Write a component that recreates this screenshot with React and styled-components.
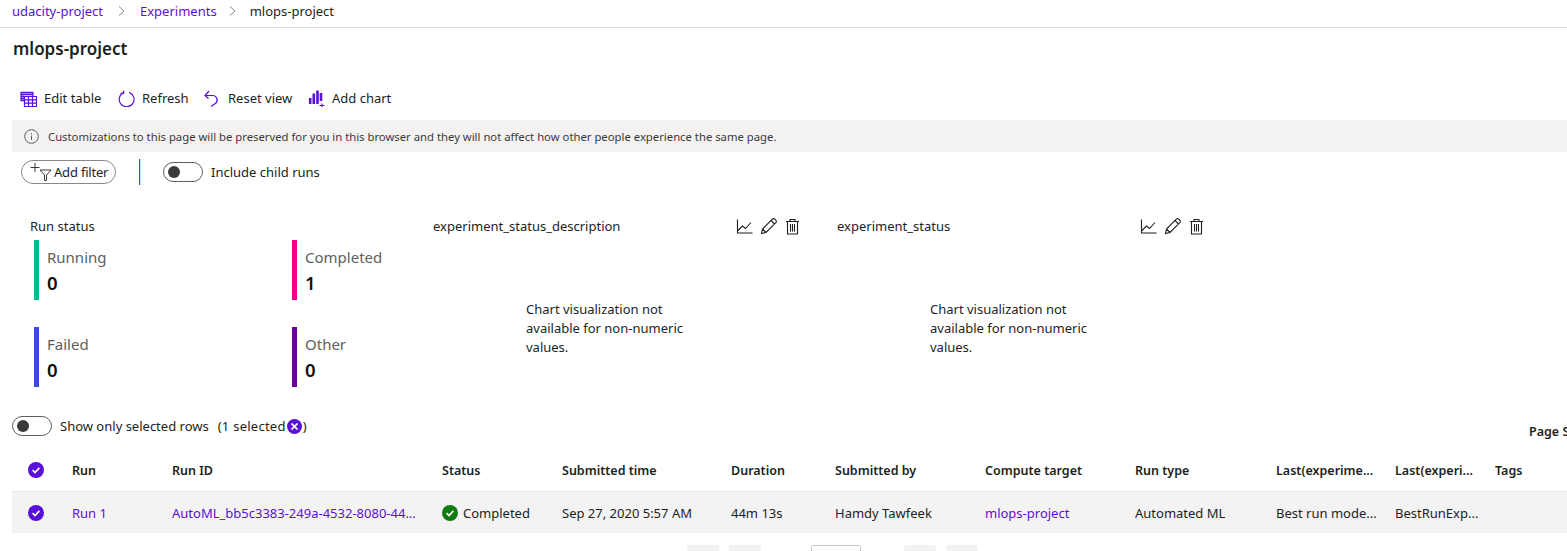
import React from 'react';
import styled, { createGlobalStyle } from 'styled-components';

const accent = '#5a10d8';
const font = '"Noto Sans", "Open Sans", sans-serif';

const GlobalStyle = createGlobalStyle`
  html, body {
    margin: 0;
    padding: 0;
    background: #fff;
    overflow: hidden;
  }
  body {
    font-family: ${font};
    font-size: 13px;
    color: #201f1e;
  }
`;

const Page = styled.div`
  width: 1567px;
  height: 551px;
  overflow: hidden;
`;

const Breadcrumb = styled.nav`
  height: 27px;
  box-sizing: border-box;
  padding: 0 0 5px 12px;
  display: flex;
  align-items: center;
  box-shadow: 0 1px 0 #dcdcdc;
`;

const Crumb = styled.a`
  color: ${props => (props.$current ? '#201f1e' : accent)};
`;

const Chevron = styled.svg`
  width: 8px;
  height: 10px;
  margin: 0 ${props => props.$gap}px;
  fill: none;
  stroke: #8a8886;
  stroke-width: 1;
`;

const Title = styled.h1`
  margin: 11px 0 0 13px;
  height: 22px;
  font-size: 17px;
  line-height: 22px;
  font-weight: 600;
  color: #201f1e;
`;

const Toolbar = styled.div`
  margin-top: 27px;
  height: 22px;
  padding-left: 20px;
  display: flex;
  align-items: center;
`;

const ToolButton = styled.button`
  width: ${props => props.$width}px;
  padding: 0;
  border: 0;
  background: none;
  font: inherit;
  color: #201f1e;
  display: flex;
  align-items: center;
  gap: 7px;
  svg {
    width: 17px;
    height: 17px;
    flex: none;
    fill: none;
    stroke: ${accent};
    stroke-width: 1.2;
  }
`;

const Notice = styled.div`
  margin: 11px 0 0 12px;
  height: 32px;
  background: #f3f2f1;
  display: flex;
  align-items: center;
  padding-left: 12px;
  gap: 9px;
  font-size: 11.3px;
  color: #3b3a39;
  svg {
    width: 15px;
    height: 15px;
    fill: none;
    stroke: #605e5c;
  }
`;

const FilterRow = styled.div`
  margin-top: 7px;
  height: 26px;
  padding-left: 21px;
  display: flex;
  align-items: center;
`;

const FilterPill = styled.button`
  width: 95px;
  height: 24px;
  box-sizing: border-box;
  padding: 0 0 0 7px;
  border: 1px solid #8a8886;
  border-radius: 12px;
  background: #fff;
  font: inherit;
  color: #201f1e;
  letter-spacing: -0.2px;
  display: flex;
  align-items: center;
  gap: 1px;
  svg {
    width: 24px;
    height: 20px;
    fill: none;
    stroke: #3b3a39;
  }
`;

const Divider = styled.span`
  width: 1px;
  height: 26px;
  margin: 0 23px;
  background: #7a5010;
  box-shadow: 1px 0 0 #cfe4f5;
`;

const Toggle = styled.span`
  width: 40px;
  height: 20px;
  flex: none;
  box-sizing: border-box;
  border: 1px solid #605e5c;
  border-radius: 10px;
  padding-left: 4px;
  display: flex;
  align-items: center;
  &::before {
    content: '';
    width: 12px;
    height: 12px;
    border-radius: 50%;
    background: #3b3a39;
  }
`;

const ToggleLabel = styled.span`
  margin-left: 8px;
`;

const Tiles = styled.section`
  margin-top: 31px;
  padding-left: 30px;
  height: 200px;
  display: grid;
  grid-template-columns: 403px 404px 404px;
`;

const TileHead = styled.div`
  height: 20px;
  width: 368px;
  display: flex;
  align-items: center;
  justify-content: space-between;
`;

const TileActions = styled.div`
  display: flex;
  gap: 7px;
  svg {
    width: 17px;
    height: 17px;
    fill: none;
    stroke: #201f1e;
    stroke-width: 1.1;
  }
`;

const StatusGrid = styled.div`
  margin: 4px 0 0 4px;
  display: grid;
  grid-template-columns: 258px 100px;
  grid-auto-rows: 60px;
  row-gap: 27px;
`;

const StatusBlock = styled.div`
  border-left: 5px solid ${props => props.$color};
  padding-left: 8px;
`;

const StatusLabel = styled.div`
  margin-top: 5px;
  font-size: 15px;
  line-height: 24px;
  color: #605e5c;
`;

const StatusValue = styled.div`
  font-size: 18.5px;
  line-height: 27px;
  font-weight: 600;
  color: #111;
`;

const ChartMessage = styled.p`
  margin: 64px 0 0 93px;
  width: 180px;
  line-height: 19px;
`;

const SelectionRow = styled.div`
  height: 20px;
  padding-left: 12px;
  display: flex;
  align-items: center;
`;

const SelectedCount = styled.span`
  margin-left: 9px;
  display: flex;
  align-items: center;
  letter-spacing: 0.25px;
`;

const ClearBadge = styled.span`
  width: 15px;
  height: 15px;
  margin: 0 1px;
  border-radius: 50%;
  background: ${accent};
  display: flex;
  align-items: center;
  justify-content: center;
  svg {
    width: 7px;
    height: 7px;
    stroke: #fff;
    stroke-width: 1.6;
  }
`;

const PageSize = styled.span`
  margin: 10px 0 0 auto;
  flex: none;
  width: 38px;
  white-space: nowrap;
  font-weight: 600;
  font-size: 12.5px;
`;

const Row = styled.div`
  margin: ${props => props.$top}px 0 0 12px;
  display: grid;
  grid-template-columns: 60px 100px 270px 120px 169px 104px 150px 150px 141px 119px 100px 1fr;
  align-items: center;
  height: ${props => props.$height}px;
  background: ${props => (props.$selected ? '#f3f3f3' : 'transparent')};
  box-shadow: ${props => (props.$selected ? 'none' : '0 1px 0 #e8e8e8')};
  font-weight: ${props => (props.$selected ? 400 : 600)};
  font-size: ${props => (props.$selected ? 13 : 12.5)}px;
`;

const Cell = styled.div`
  white-space: nowrap;
  color: ${props => (props.$link ? accent : '#201f1e')};
`;

const StatusCell = styled.div`
  display: flex;
  align-items: center;
  gap: 5px;
  svg {
    width: 16px;
    height: 16px;
    flex: none;
  }
`;

const CheckCell = styled.div`
  padding-left: 16px;
  display: flex;
  svg {
    width: 16px;
    height: 16px;
  }
`;

const Pager = styled.div`
  margin-top: 12px;
  padding-left: 687px;
  display: flex;
`;

const PageButton = styled.span`
  width: 32px;
  height: 32px;
  margin-right: ${props => props.$gap}px;
  background: #f3f2f1;
  border-radius: 2px;
`;

const PageInput = styled.span`
  width: 50px;
  height: 32px;
  box-sizing: border-box;
  margin-right: 43px;
  border: 1px solid #c8c6c4;
  border-radius: 2px;
`;

const Check = ({ color = accent }) => (
  <svg viewBox="0 0 16 16">
    <circle cx="8" cy="8" r="8" fill={color} />
    <path d="M4.6 8.2l2.4 2.3 4.4-4.6" fill="none" stroke="#fff" strokeWidth="1.6" />
  </svg>
);

const GridIcon = () => (
  <svg viewBox="0 0 17 17">
    <path d="M1 2.5h12M1 4.5h12M1 6.5h3M1 8.5h3M1 10.5h3" strokeWidth="1.4" />
    <path d="M4.5 6.5h12v10h-12zM4.5 9.8h12M4.5 13.1h12M8.5 6.5v10M12.5 6.5v10" />
    <path d="M1 2v9M13 2v4" />
  </svg>
);

const RefreshIcon = () => (
  <svg viewBox="0 0 17 17">
    <path d="M5.6 2.6a7.4 7.4 0 1 0 5.6-.2" />
    <path d="M5.6 0.4v3h-3" />
  </svg>
);

const ResetIcon = () => (
  <svg viewBox="0 0 17 17">
    <path d="M1 5.500h7.500a4.500 4.500 0 0 1 3.500 7.500L7 16.500" />
    <path d="M5 1L1 5.500l3.500 3" />
  </svg>
);

const BarsIcon = () => (
  <svg viewBox="0 0 17 17">
    <path d="M2.200 8v6M5.800 3.500v10.500M9.500 0.500v13.500M13 3v8" strokeWidth="2.600" />
    <path d="M11.500 15.500h5M14 13.500v3.500" strokeWidth="1.100" />
  </svg>
);

const TrendIcon = () => (
  <svg viewBox="0 0 17 17">
    <path d="M1.500 1.500v13.500h15" />
    <path d="M2 12.500l4.500-4.500 3 2.500 5.500-6" />
  </svg>
);

const PencilIcon = () => (
  <svg viewBox="0 0 17 17">
    <path d="M1.500 15.500l1-4.500L12.300 1.200a1.800 1.800 0 0 1 2.600 0l.9.9a1.800 1.800 0 0 1 0 2.600L6 14.500zM2.500 11L6 14.500M11 2.500l3.500 3.500" />
  </svg>
);

const TrashIcon = () => (
  <svg viewBox="0 0 17 17">
    <path d="M2 3.500h13M6 3.500V1.500h5v2M3.500 3.500v12.500h10V3.500M6.500 6v7.500M8.500 6v7.500M10.500 6v7.500" />
  </svg>
);

const ChartActions = () => (
  <TileActions>
    <TrendIcon />
    <PencilIcon />
    <TrashIcon />
  </TileActions>
);

const headers = ['Run', 'Run ID', 'Status', 'Submitted time', 'Duration', 'Submitted by', 'Compute target', 'Run type', 'Last(experime...', 'Last(experi...', 'Tags'];

export default function App() {
  return (
    <Page>
      <GlobalStyle />
      <Breadcrumb>
        <Crumb>udacity-project</Crumb>
        <Chevron $gap={14.5} viewBox="0 0 8 10"><path d="M1 0.500l5 4.500-5 4.500" /></Chevron>
        <Crumb>Experiments</Crumb>
        <Chevron $gap={12.5} viewBox="0 0 8 10"><path d="M1 0.500l5 4.500-5 4.500" /></Chevron>
        <Crumb $current>mlops-project</Crumb>
      </Breadcrumb>
      <Title>mlops-project</Title>

      <Toolbar>
        <ToolButton $width={98}><GridIcon />Edit table</ToolButton>
        <ToolButton $width={86}><RefreshIcon />Refresh</ToolButton>
        <ToolButton $width={104}><ResetIcon />Reset view</ToolButton>
        <ToolButton $width={100}><BarsIcon />Add chart</ToolButton>
      </Toolbar>

      <Notice>
        <svg viewBox="0 0 15 15">
          <circle cx="7.500" cy="7.500" r="6.800" />
          <path d="M7.500 6.500v4.500M7.500 4v1.200" />
        </svg>
        Customizations to this page will be preserved for you in this browser and they will not affect how other people experience the same page.
      </Notice>

      <FilterRow>
        <FilterPill>
          <svg viewBox="0 0 24 20">
            <path d="M1.500 5.500h9M6 1v9M11 8h11l-4.500 5v5.500h-2V13z" />
          </svg>
          Add filter
        </FilterPill>
        <Divider />
        <Toggle />
        <ToggleLabel>Include child runs</ToggleLabel>
      </FilterRow>

      <Tiles>
        <div>
          <TileHead>Run status</TileHead>
          <StatusGrid>
            <StatusBlock $color="#00bc8f"><StatusLabel>Running</StatusLabel><StatusValue>0</StatusValue></StatusBlock>
            <StatusBlock $color="#f2008c"><StatusLabel>Completed</StatusLabel><StatusValue>1</StatusValue></StatusBlock>
            <StatusBlock $color="#3b4bd8"><StatusLabel>Failed</StatusLabel><StatusValue>0</StatusValue></StatusBlock>
            <StatusBlock $color="#6a0099"><StatusLabel>Other</StatusLabel><StatusValue>0</StatusValue></StatusBlock>
          </StatusGrid>
        </div>
        <div>
          <TileHead>experiment_status_description<ChartActions /></TileHead>
          <ChartMessage>Chart visualization not available for non-numeric values.</ChartMessage>
        </div>
        <div>
          <TileHead>experiment_status<ChartActions /></TileHead>
          <ChartMessage>Chart visualization not available for non-numeric values.</ChartMessage>
        </div>
      </Tiles>

      <SelectionRow>
        <Toggle />
        <ToggleLabel>Show only selected rows</ToggleLabel>
        <SelectedCount>(1 selected<ClearBadge><svg viewBox="0 0 7 7"><path d="M0.500 0.500l6 6M6.500 0.500l-6 6" /></svg></ClearBadge>)</SelectedCount>
        <PageSize>Page S</PageSize>
      </SelectionRow>

      <Row $height={42} $top={13}>
        <CheckCell><Check /></CheckCell>
        {headers.map(h => <Cell key={h}>{h}</Cell>)}
      </Row>
      <Row $height={41} $top={1} $selected>
        <CheckCell><Check /></CheckCell>
        <Cell $link>Run 1</Cell>
        <Cell $link>AutoML_bb5c3383-249a-4532-8080-44...</Cell>
        <StatusCell><Check color="#107c10" />Completed</StatusCell>
        <Cell>Sep 27, 2020 5:57 AM</Cell>
        <Cell>44m 13s</Cell>
        <Cell>Hamdy Tawfeek</Cell>
        <Cell $link>mlops-project</Cell>
        <Cell>Automated ML</Cell>
        <Cell>Best run mode...</Cell>
        <Cell>BestRunExp...</Cell>
        <Cell />
      </Row>

      <Pager>
        <PageButton $gap={10} />
        <PageButton $gap={50} />
        <PageInput />
        <PageButton $gap={10} />
        <PageButton $gap={0} />
      </Pager>
    </Page>
  );
}
